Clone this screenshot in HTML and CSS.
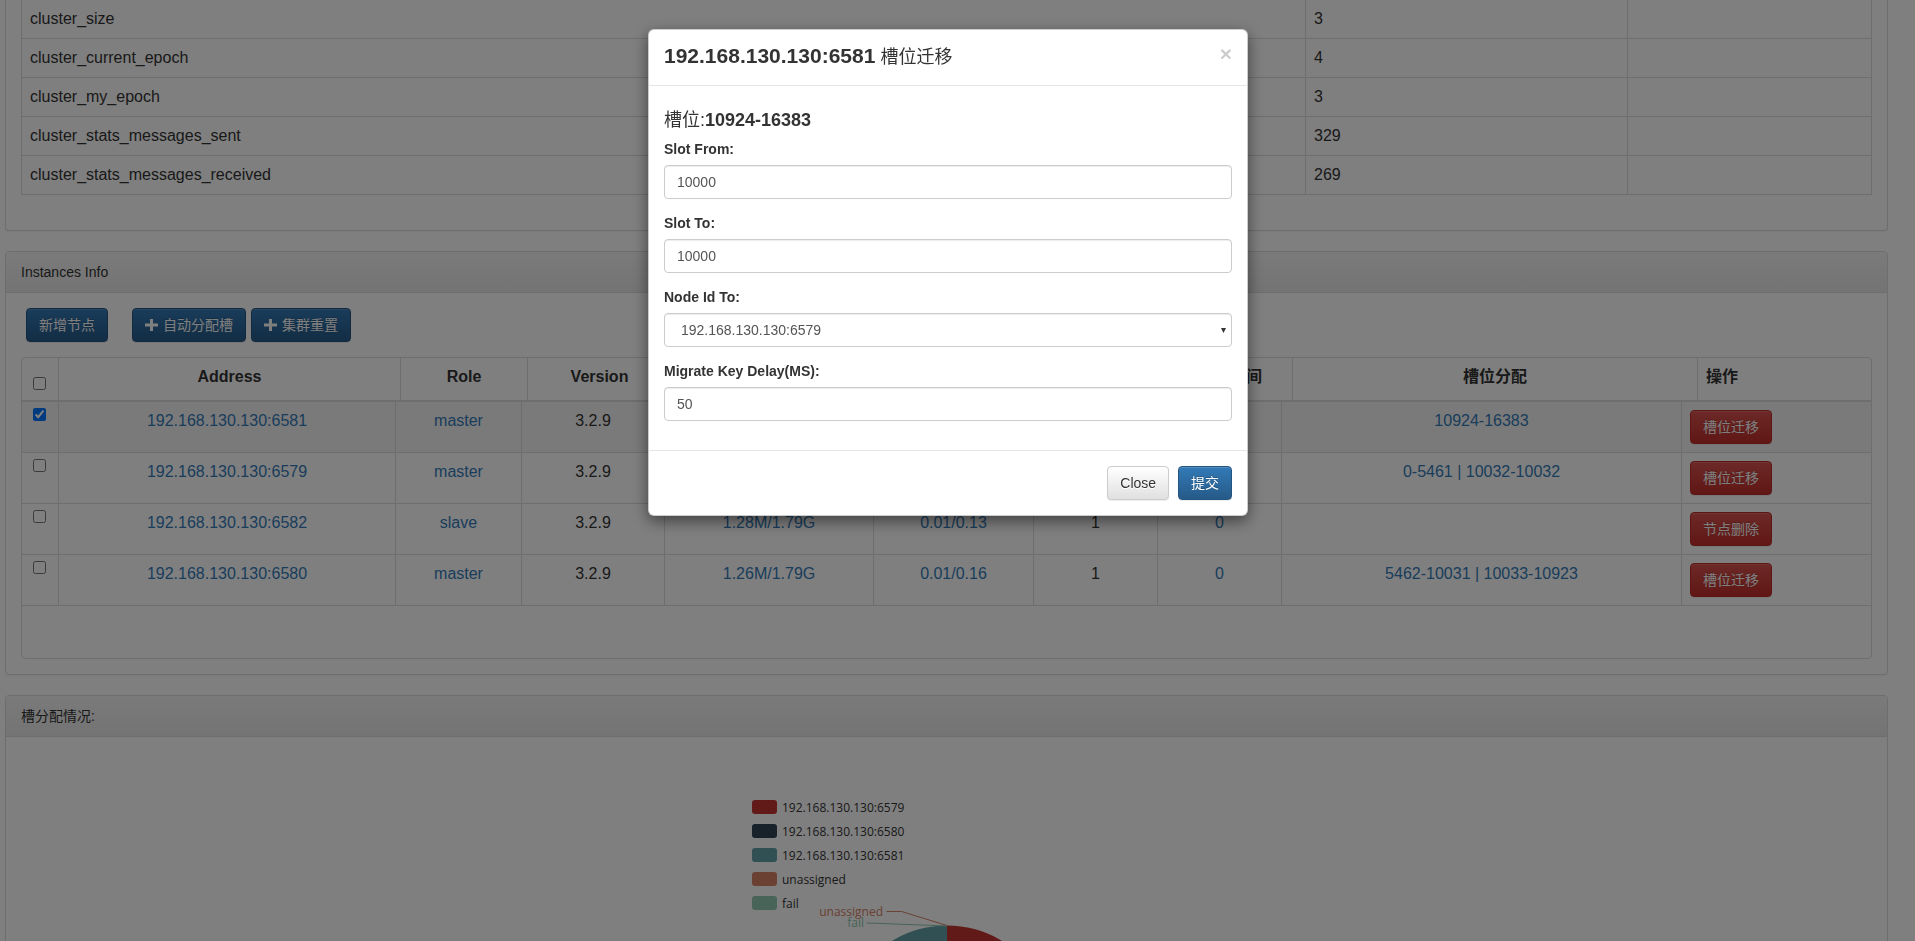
FILE: index.html
```html
<!DOCTYPE html>
<html lang="zh">
<head>
<meta charset="utf-8">
<title>Cluster Info</title>
<link rel="stylesheet" href="styles.css">
</head>
<body>
<div class="page">
  <div class="panel panel-top">
    <div class="panel-body">
      <div class="kv-table">
        <div class="kv-row"><div class="kv-cell">cluster_size</div><div class="kv-cell">3</div><div class="kv-cell"></div></div>
        <div class="kv-row"><div class="kv-cell">cluster_current_epoch</div><div class="kv-cell">4</div><div class="kv-cell"></div></div>
        <div class="kv-row"><div class="kv-cell">cluster_my_epoch</div><div class="kv-cell">3</div><div class="kv-cell"></div></div>
        <div class="kv-row"><div class="kv-cell">cluster_stats_messages_sent</div><div class="kv-cell">329</div><div class="kv-cell"></div></div>
        <div class="kv-row"><div class="kv-cell">cluster_stats_messages_received</div><div class="kv-cell">269</div><div class="kv-cell"></div></div>
      </div>
    </div>
  </div>

  <div class="panel">
    <div class="panel-heading">Instances Info</div>
    <div class="panel-body">
      <div class="toolbar">
        <button class="btn btn-primary">新增节点</button>
        <div class="btn-group">
          <button class="btn btn-primary"><svg class="plus" width="13" height="12" viewBox="0 0 13 12"><path d="M5 0h3v4.5h5v3h-5V12H5V7.5H0v-3h5z" fill="currentColor"/></svg>自动分配槽</button>
          <button class="btn btn-primary"><svg class="plus" width="13" height="12" viewBox="0 0 13 12"><path d="M5 0h3v4.5h5v3h-5V12H5V7.5H0v-3h5z" fill="currentColor"/></svg>集群重置</button>
        </div>
      </div>
      <div class="grid-table">
        <div class="grid-head">
          <div class="th th-check"><input type="checkbox"></div>
          <div class="th">Address</div>
          <div class="th">Role</div>
          <div class="th">Version</div>
          <div class="th">内存</div>
          <div class="th">CPU</div>
          <div class="th">连接数</div>
          <div class="th">响应时间</div>
          <div class="th">槽位分配</div>
          <div class="th th-left">操作</div>
        </div>
        <div class="grid-body">
          <div class="tr active">
            <div class="td td-check"><input type="checkbox" checked></div>
            <div class="td link">192.168.130.130:6581</div>
            <div class="td link">master</div>
            <div class="td">3.2.9</div>
            <div class="td link">1.27M/1.79G</div>
            <div class="td link">0.01/0.14</div>
            <div class="td">1</div>
            <div class="td link">0</div>
            <div class="td link">10924-16383</div>
            <div class="td td-left"><button class="btn btn-danger">槽位迁移</button></div>
          </div>
          <div class="tr">
            <div class="td td-check"><input type="checkbox"></div>
            <div class="td link">192.168.130.130:6579</div>
            <div class="td link">master</div>
            <div class="td">3.2.9</div>
            <div class="td link">1.26M/1.79G</div>
            <div class="td link">0.01/0.15</div>
            <div class="td">1</div>
            <div class="td link">0</div>
            <div class="td link">0-5461 | 10032-10032</div>
            <div class="td td-left"><button class="btn btn-danger">槽位迁移</button></div>
          </div>
          <div class="tr">
            <div class="td td-check"><input type="checkbox"></div>
            <div class="td link">192.168.130.130:6582</div>
            <div class="td link">slave</div>
            <div class="td">3.2.9</div>
            <div class="td link">1.28M/1.79G</div>
            <div class="td link">0.01/0.13</div>
            <div class="td">1</div>
            <div class="td link">0</div>
            <div class="td link"></div>
            <div class="td td-left"><button class="btn btn-danger">节点删除</button></div>
          </div>
          <div class="tr">
            <div class="td td-check"><input type="checkbox"></div>
            <div class="td link">192.168.130.130:6580</div>
            <div class="td link">master</div>
            <div class="td">3.2.9</div>
            <div class="td link">1.26M/1.79G</div>
            <div class="td link">0.01/0.16</div>
            <div class="td">1</div>
            <div class="td link">0</div>
            <div class="td link">5462-10031 | 10033-10923</div>
            <div class="td td-left"><button class="btn btn-danger">槽位迁移</button></div>
          </div>
        </div>
      </div>
    </div>
  </div>

  <div class="panel">
    <div class="panel-heading">槽分配情况:</div>
    <div class="panel-body chart-body">
      <svg class="chart" width="1881" height="300" viewBox="6 735 1881 300">
        <g class="legend">
          <rect x="752" y="798" width="25" height="14" rx="3" fill="#c23531"/>
          <text x="782" y="809.5">192.168.130.130:6579</text>
          <rect x="752" y="822" width="25" height="14" rx="3" fill="#2f4554"/>
          <text x="782" y="833.5">192.168.130.130:6580</text>
          <rect x="752" y="846" width="25" height="14" rx="3" fill="#61a0a8"/>
          <text x="782" y="857.5">192.168.130.130:6581</text>
          <rect x="752" y="870" width="25" height="14" rx="3" fill="#d48265"/>
          <text x="782" y="881.5">unassigned</text>
          <rect x="752" y="894" width="25" height="14" rx="3" fill="#91c7ae"/>
          <text x="782" y="905.5">fail</text>
        </g>
        <path d="M947 1029.5 L947 923.5 A106 106 0 0 1 1038.8 1082.5 Z" fill="#c23531"/>
        <path d="M947 1029.5 L1038.8 1082.5 A106 106 0 0 1 855.2 1082.5 Z" fill="#2f4554"/>
        <path d="M947 1029.5 L855.2 1082.5 A106 106 0 0 1 947 923.5 Z" fill="#61a0a8"/>
        <polyline points="886.5,909.5 901.5,909.5 947,923.5" fill="none" stroke="#d48265" stroke-width="1"/>
        <text class="lbl" x="883" y="913.5" text-anchor="end" fill="#d48265">unassigned</text>
        <polyline points="866.5,921 882,921.5 947,924" fill="none" stroke="#91c7ae" stroke-width="1"/>
        <text class="lbl" x="864" y="925" text-anchor="end" fill="#91c7ae">fail</text>
      </svg>
    </div>
  </div>
</div>

<div class="backdrop"></div>
<div class="modal">
  <div class="modal-dialog">
    <div class="modal-content">
      <div class="modal-header">
        <button class="close" type="button">×</button>
        <h4 class="modal-title"><b>192.168.130.130:6581</b> 槽位迁移</h4>
      </div>
      <div class="modal-body">
        <h4 class="slot-title">槽位:<b>10924-16383</b></h4>
        <div class="form-group">
          <label>Slot From:</label>
          <input class="form-control" type="text" value="10000">
        </div>
        <div class="form-group">
          <label>Slot To:</label>
          <input class="form-control" type="text" value="10000">
        </div>
        <div class="form-group">
          <label>Node Id To:</label>
          <div class="form-control select"><span>192.168.130.130:6579</span><span class="caret">▾</span></div>
        </div>
        <div class="form-group">
          <label>Migrate Key Delay(MS):</label>
          <input class="form-control" type="text" value="50">
        </div>
      </div>
      <div class="modal-footer">
        <button class="btn btn-default" type="button">Close</button>
        <button class="btn btn-primary" type="button">提交</button>
      </div>
    </div>
  </div>
</div>
</body>
</html>
```

FILE: styles.css
```css
html, body {
  height: 941px;
  overflow: hidden;
}
body {
  margin: 0;
  font-family: "Liberation Sans", Arial, "Noto Sans CJK SC", sans-serif;
  font-size: 14px;
  line-height: 1.42857;
  color: #333;
  background: #fff;
}
* { box-sizing: border-box; }

.page {
  padding: 0 27px 0 5px;
}

/* panels */
.panel {
  background: #fff;
  border: 1px solid #ddd;
  border-radius: 4px;
  margin-bottom: 20px;
  box-shadow: 0 1px 2px rgba(0,0,0,.05);
}
.panel-top {
  border-top: none;
  border-radius: 0 0 4px 4px;
}
.panel-top .panel-body { padding-top: 0; }
.panel-heading {
  padding: 10px 15px;
  line-height: 20px;
  border-bottom: 1px solid #ddd;
  border-radius: 3px 3px 0 0;
  background-image: linear-gradient(to bottom, #f5f5f5 0, #e8e8e8 100%);
}
.panel-body { padding: 15px; }

/* key/value table */
.kv-table {
  margin-top: -1px;
  margin-bottom: 20px;
  border: 1px solid #ddd;
  font-size: 16px;
  line-height: 22px;
}
.kv-row {
  display: grid;
  grid-template-columns: 1283px 322px 1fr;
}
.kv-row + .kv-row { border-top: 1px solid #ddd; }
.kv-cell {
  padding: 8px;
  height: 38px;
}
.kv-cell + .kv-cell { border-left: 1px solid #ddd; }

/* toolbar */
.toolbar {
  display: flex;
  gap: 24px;
  margin: 0 0 15px 5px;
}
.btn-group { display: flex; gap: 5px; }

.btn {
  display: inline-block;
  height: 34px;
  padding: 6px 12px;
  font-family: inherit;
  font-size: 14px;
  line-height: 20px;
  border: 1px solid transparent;
  border-radius: 4px;
  white-space: nowrap;
  cursor: pointer;
}
.btn-primary {
  color: #fff;
  background-image: linear-gradient(to bottom, #337ab7 0, #265a88 100%);
  border-color: #245580;
  text-shadow: 0 -1px 0 rgba(0,0,0,.2);
  box-shadow: inset 0 1px 0 rgba(255,255,255,.15), 0 1px 1px rgba(0,0,0,.075);
}
.btn-danger {
  color: #fff;
  background-image: linear-gradient(to bottom, #d9534f 0, #c12e2a 100%);
  border-color: #b92c28;
  text-shadow: 0 -1px 0 rgba(0,0,0,.2);
  box-shadow: inset 0 1px 0 rgba(255,255,255,.15), 0 1px 1px rgba(0,0,0,.075);
}
.btn-default {
  color: #333;
  background-image: linear-gradient(to bottom, #fff 0, #e0e0e0 100%);
  border-color: #ccc;
  text-shadow: 0 1px 0 #fff;
  box-shadow: inset 0 1px 0 rgba(255,255,255,.15), 0 1px 1px rgba(0,0,0,.075);
}
.plus {
  vertical-align: -1px;
  margin-right: 5px;
}

/* instances table */
.grid-table {
  border: 1px solid #ddd;
  border-radius: 4px;
  font-size: 16px;
  line-height: 22px;
}
.grid-head {
  display: grid;
  grid-template-columns: 36px 342px 127px 144px 210px 161px 125px 125px 405px 1fr;
  border-bottom: 2px solid #ddd;
}
.th {
  padding: 8px 8px 10px;
  font-weight: bold;
  text-align: center;
  border-left: 1px solid #ddd;
  white-space: nowrap;
}
.grid-body { height: 256px; }
.tr {
  display: grid;
  grid-template-columns: 36px 337px 126px 143px 209px 160px 124px 124px 400px 1fr;
  height: 51px;
  border-bottom: 1px solid #ddd;
}
.tr.active { background: #f5f5f5; }
.td {
  padding: 8px;
  text-align: center;
  border-left: 1px solid #ddd;
  white-space: nowrap;
}
.grid-head .th-left, .tr .td-left { text-align: left; }
.grid-head .th-check, .tr .td-check { border-left: none; text-align: left; }
.th-check input { margin: 11px 0 0 3px; }
.td-check input { margin: -2px 0 0 3px; }
input[type=checkbox] { width: 13px; height: 13px; display: block; }
.link { color: #337ab7; }

/* chart */
.chart-body {
  padding: 0;
  height: 300px;
}
.chart { display: block; }
.chart text {
  font-family: "Open Sans", "Noto Sans", sans-serif;
  font-size: 12px;
}
.legend text { fill: #333; }

/* modal */
.backdrop {
  position: fixed;
  inset: 0;
  background: rgba(0,0,0,.5);
  z-index: 10;
}
.modal {
  position: fixed;
  inset: 0;
  z-index: 20;
  padding-right: 19px;
}
.modal-dialog {
  width: 600px;
  margin: 29px auto 0;
}
.modal-content {
  background: #fff;
  border: 1px solid rgba(0,0,0,.2);
  border-radius: 6px;
  box-shadow: 0 5px 15px rgba(0,0,0,.5);
}
.modal-header {
  padding: 15px;
  border-bottom: 1px solid #e5e5e5;
}
.close {
  float: right;
  margin-top: -2px;
  padding: 0;
  border: 0;
  background: none;
  font-family: inherit;
  font-size: 21px;
  font-weight: bold;
  line-height: 1;
  color: #000;
  opacity: .2;
  text-shadow: 0 1px 0 #fff;
}
.modal-title {
  margin: 0;
  height: 25px;
  font-size: 18px;
  line-height: 25px;
  font-weight: normal;
}
.modal-title b {
  font-size: 21px;
  line-height: 1;
}
.modal-body { padding: 15px 15px 14px; }
.slot-title {
  margin: 10px 0 9px;
  font-size: 18px;
  line-height: 1.1;
  font-weight: normal;
}
.form-group { margin-bottom: 15px; }
label {
  display: inline-block;
  margin-bottom: 5px;
  font-weight: bold;
}
.form-control {
  display: block;
  width: 100%;
  height: 34px;
  padding: 6px 12px;
  font-family: inherit;
  font-size: 14px;
  line-height: 20px;
  color: #555;
  background: #fff;
  border: 1px solid #ccc;
  border-radius: 4px;
  box-shadow: inset 0 1px 1px rgba(0,0,0,.075);
}
.select {
  display: flex;
  justify-content: space-between;
  align-items: center;
  padding: 6px 5px 6px 16px;
}
.caret {
  font-size: 10px;
  color: #333;
}
.modal-footer {
  padding: 15px;
  text-align: right;
  border-top: 1px solid #e5e5e5;
}
.modal-footer .btn + .btn { margin-left: 5px; }
```
